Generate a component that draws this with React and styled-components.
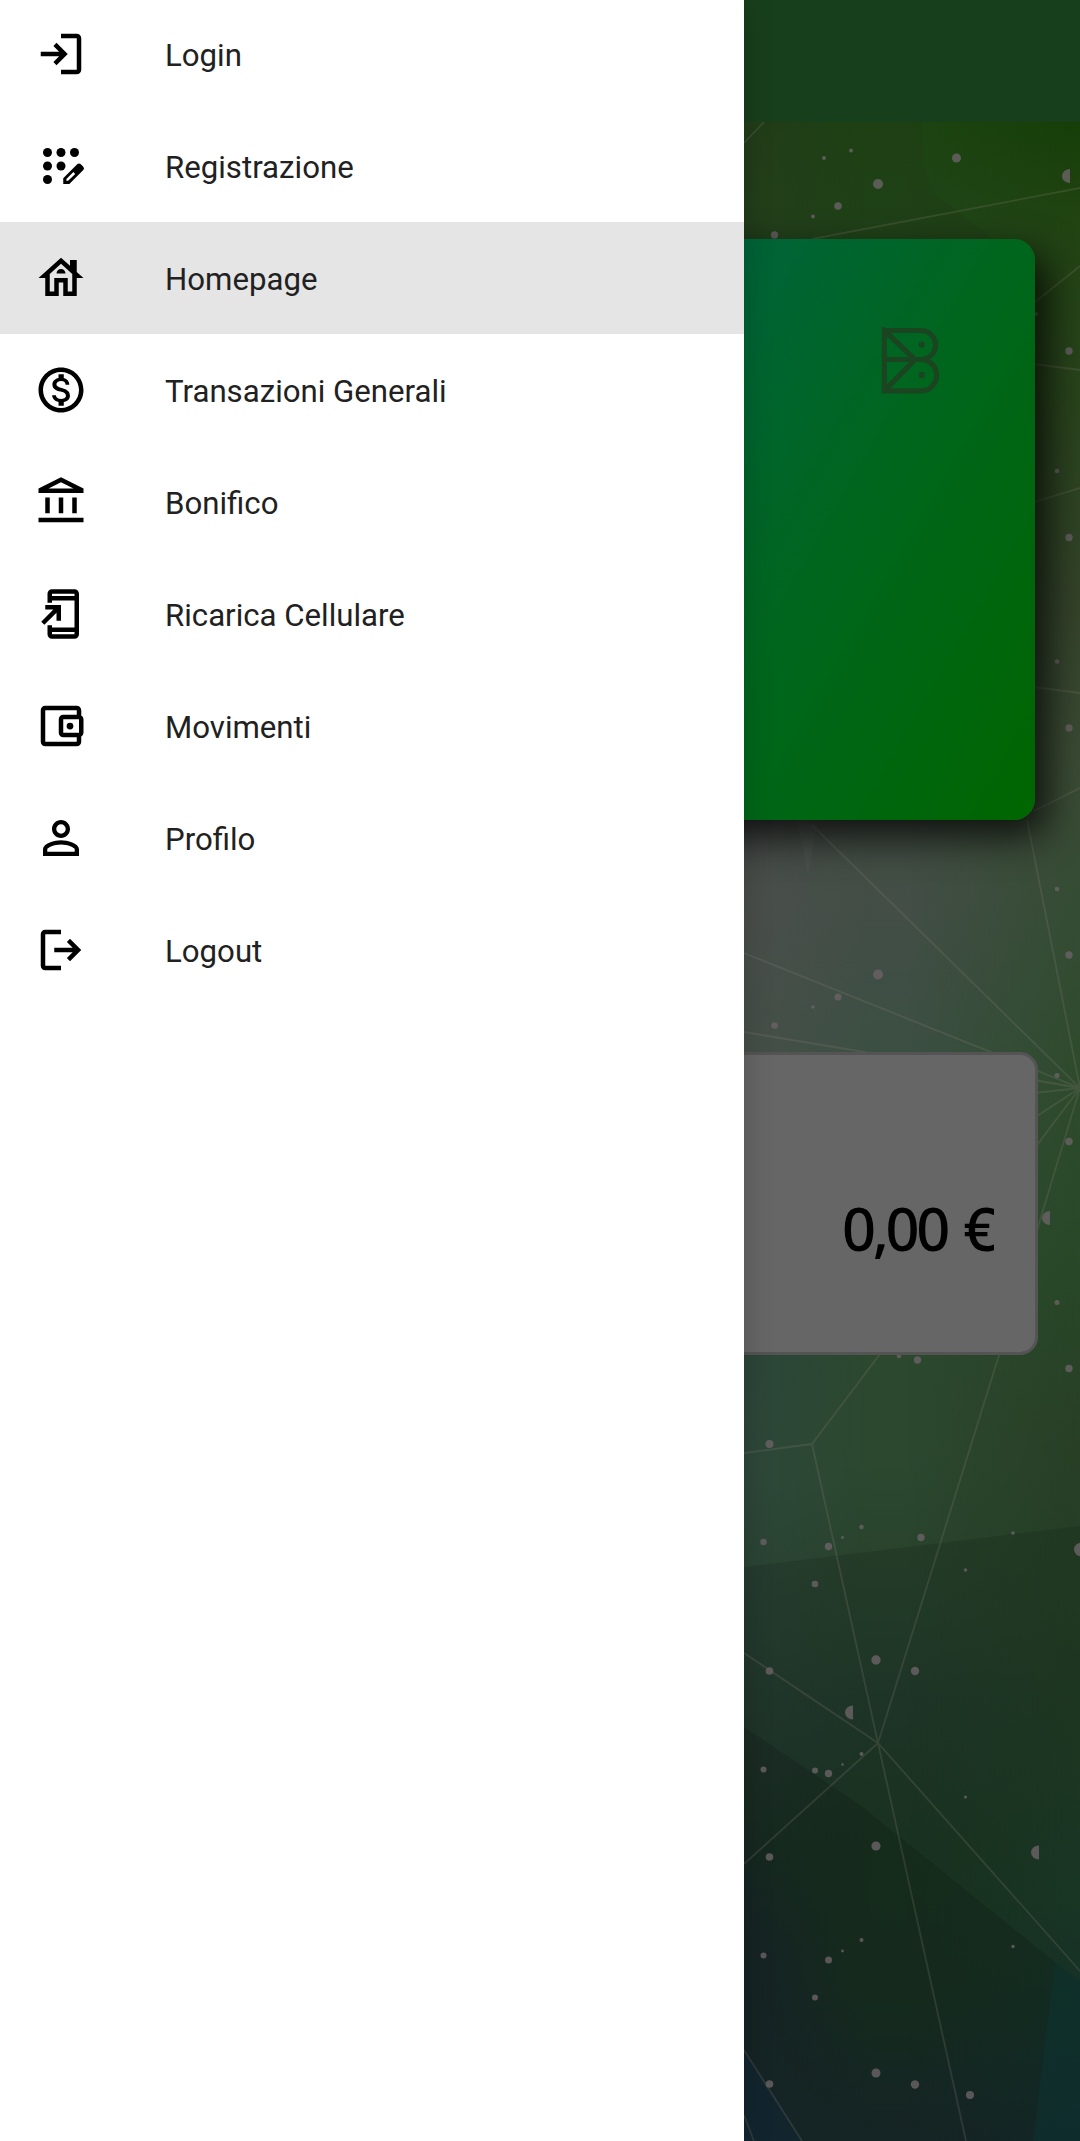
import React from 'react';
import styled, { createGlobalStyle } from 'styled-components';
import {
  MdOutlineHouse,
  MdOutlineMonetizationOn,
  MdOutlineAccountBalanceWallet,
  MdPersonOutline,
} from 'react-icons/md';

const GlobalStyle = createGlobalStyle`
  body {
    margin: 0;
    background: #1d3024;
  }
`;

const Screen = styled.div`
  position: relative;
  width: 1080px;
  height: 2141px;
  overflow: hidden;
  font-family: Roboto, 'Noto Sans', sans-serif;
`;

const Backdrop = styled.svg`
  position: absolute;
  inset: 0;
`;

const Page = styled.div`
  position: relative;
  display: flex;
  flex-direction: column;
  height: 100%;
`;

const AppBar = styled.header`
  height: 122px;
  flex: none;
  background: #183f1b;
`;

const Content = styled.main`
  display: flex;
  flex-direction: column;
  align-items: center;
  gap: 232px;
  padding-top: 116.5px;
`;

const BankCard = styled.section`
  box-sizing: border-box;
  display: flex;
  justify-content: flex-end;
  align-items: flex-start;
  width: 989px;
  height: 581.5px;
  padding: 88.5px 96px;
  border-radius: 21px;
  background: linear-gradient(120deg, #005a66 10%, #006432 58%, #00661d 73%, #006600 100%);
  box-shadow: 12px 16px 38px rgba(0, 0, 0, 0.78);
`;

const BalanceCard = styled.section`
  box-sizing: border-box;
  display: flex;
  justify-content: flex-end;
  align-items: center;
  width: 996px;
  height: 303px;
  padding: 49px 41px 0 0;
  border: 3px solid #545454;
  border-radius: 18px;
  background: #666;
`;

const Balance = styled.span`
  overflow: hidden;
  font: 500 59.5px/82px 'Noto Sans', sans-serif;
  letter-spacing: -3.4px;
  word-spacing: 4.5px;
  color: #000;
`;

const Drawer = styled.nav`
  position: absolute;
  top: 0;
  left: 0;
  display: flex;
  flex-direction: column;
  width: 744px;
  height: 100%;
  background: #fff;
  box-shadow: 0 0 28px rgba(0, 0, 0, 0.2);
`;

const Item = styled.a`
  display: flex;
  align-items: center;
  flex: none;
  gap: 77px;
  height: 112px;
  padding-left: 34px;
  background: ${(p) => (p.$active ? '#e5e5e5' : 'transparent')};

  &:first-child {
    margin-top: -2px;
  }

  svg {
    flex: none;
    width: 54px;
    height: 54px;
    fill: #000;
    color: #000;
  }
`;

const Label = styled.span`
  padding-top: 3px;
  font-size: 31.2px;
  line-height: 37px;
  color: #212121;
`;

const LoginIcon = () => (
  <svg viewBox="0 -960 960 960">
    <path d="M480-120v-80h280v-560H480v-80h280q33 0 56.5 23.5T840-760v560q0 33-23.5 56.5T760-120H480Zm-80-160-55-58 102-102H120v-80h327L345-622l55-58 200 200-200 200Z" />
  </svg>
);

const LogoutIcon = () => (
  <svg viewBox="0 -960 960 960">
    <path d="M200-120q-33 0-56.5-23.5T120-200v-560q0-33 23.5-56.5T200-840h280v80H200v560h280v80H200Zm440-160-55-58 102-102H360v-80h327L585-622l55-58 200 200-200 200Z" />
  </svg>
);

const RegistrationIcon = () => (
  <svg viewBox="0 0 24 24">
    {[[6, 6], [12, 6], [18, 6], [6, 12], [12, 12], [6, 18]].map(([x, y]) => (
      <circle key={`${x}-${y}`} cx={x} cy={y} r="2" />
    ))}
    <path
      fillRule="evenodd"
      d="M13 20V17.4L19.2 11.2Q20 10.5 20.8 11.2L21.9 12.3Q22.6 13 21.9 13.8L15.7 20ZM14.4 18.6H15.2L18.3 15.5 17.5 14.7 14.4 17.8Z"
    />
  </svg>
);

const BankIcon = () => (
  <svg viewBox="0 -960 960 960">
    <path d="M200-280v-280h80v280h-80Zm240 0v-280h80v280h-80ZM80-120v-80h800v80H80Zm600-160v-280h80v280h-80ZM80-640v-80l400-200 400 200v80H80Zm178-80h444L480-830 258-720Z" />
  </svg>
);

const PhoneIcon = () => (
  <svg viewBox="0 0 24 24">
    <path
      fillRule="evenodd"
      d="M20 3c0-1.1-.9-2-2-2H8c-1.1 0-2 .9-2 2v4h2V6h10v12H8v-1H6v4c0 1.1.9 2 2 2h10c1.1 0 2-.9 2-2ZM8 3h10v1H8ZM8 20h10v1H8Z"
    />
    <path d="M5 8h7v7h-2v-3.6l-5.4 5.4-1.4-1.4L8.6 10H5Z" />
  </svg>
);

const CardLogo = () => (
  <svg width="58" height="68" viewBox="881 327 58 68" fill="none" stroke="#1b4520" strokeWidth="5.2">
    <path d="M884.3 330.5H921a14.5 14.5 0 0 1 0 29H884.3M921 359.5a15.7 15.7 0 0 1 0 31.4H884.3V330.5L915 359.5 884.3 390.9" />
    <circle cx="921.8" cy="344.6" r="3.2" fill="#1b4520" stroke="none" />
    <circle cx="921.8" cy="374.9" r="3.2" fill="#1b4520" stroke="none" />
  </svg>
);

const columns = [
  {
    id: 'left',
    stops: [[122, '#233e1c'], [238, '#254220'], [820, '#464a48'], [900, '#4b4f4c'], [1050, '#465049'], [1360, '#2d463a'], [1480, '#2e483b'], [1566, '#2b4436'], [1720, '#253c30'], [1850, '#1e342b'], [1960, '#1e2f30'], [2141, '#1d2f32']],
  },
  {
    id: 'middle',
    stops: [[122, '#1d4412'], [238, '#20451a'], [820, '#404b41'], [900, '#434e46'], [1050, '#3c4f43'], [1360, '#2c482f'], [1460, '#2c482f'], [1560, '#29432d'], [1700, '#223b2c'], [1850, '#1d3824'], [1980, '#1c3726'], [2141, '#1c3030']],
  },
  {
    id: 'right',
    stops: [[122, '#163f08'], [238, '#234414'], [460, '#2c4420'], [600, '#34432a'], [780, '#3b4c35'], [900, '#354c34'], [1050, '#2f4b2e'], [1250, '#284828'], [1450, '#283f26'], [1560, '#253e26'], [1700, '#213d26'], [1900, '#1d3c29'], [2000, '#18382c'], [2141, '#183232']],
  },
];

const lines = [
  [744, 143, 764, 122], [812, 239, 1080, 188], [1034, 303, 1080, 266],
  [1034, 364, 1080, 370], [1034, 502, 1080, 488], [1034, 687, 1080, 693],
  [1034, 811, 1080, 788], [812, 825, 1080, 1088], [1027, 820, 1080, 1088],
  [744, 953, 1080, 1088], [744, 1032, 1080, 1088], [1034, 1080, 1080, 1088],
  [1034, 1093, 1080, 1088], [1034, 1118, 1080, 1088], [1034, 1149, 1080, 1088],
  [1080, 1088, 1034, 1240], [880, 1354, 812, 1444], [744, 1453, 812, 1444],
  [812, 1444, 878, 1743], [1000, 1352, 878, 1743], [744, 1653, 878, 1743],
  [878, 1743, 744, 1864], [878, 1743, 1080, 1971], [878, 1743, 966, 2141],
  [744, 2050, 802, 2141], [744, 2115, 754, 2141],
];

const dots = [
  [824, 158, 2], [851, 150.5, 2], [878, 184, 5], [838, 206, 3.7], [813, 216.5, 2], [774.5, 235, 3.7],
  [956.5, 158, 4.5], [1036, 314, 2], [1069, 351, 3.7], [1057, 471, 2.3], [1069, 537.5, 3.7],
  [1057, 661.5, 2.3], [1069, 728, 3.7], [1057, 889, 2.3], [1069, 955, 3.7], [878, 974.5, 5],
  [838, 997, 3.5], [813, 1007, 1.8], [774.5, 1025.5, 3.3], [1057, 1075.5, 2.5], [1069, 1141.5, 3.7],
  [1057, 1302.5, 2.5], [1069, 1368.5, 3.7], [899, 1356, 2.3], [917.5, 1360, 3.7], [769.5, 1444, 4],
  [763.5, 1542, 3.2], [828.5, 1546.5, 3.7], [861.5, 1527, 2.2], [842.5, 1537.5, 1.4], [921, 1537.5, 3.7],
  [1013, 1533, 1.8], [965.5, 1570, 1.8], [815, 1584, 3.3], [876, 1660, 4.7], [915, 1671, 4.2],
  [769.5, 1671, 3.8], [763.5, 1769.5, 3], [815, 1770.5, 3], [828.5, 1773.5, 3.7], [861.5, 1754, 2],
  [842.5, 1764.5, 1.3], [965.5, 1797, 1.6], [876, 1846, 4.6], [769.5, 1857, 3.8], [763.5, 1955.5, 3],
  [828.5, 1960, 3.5], [861.5, 1940, 2], [842.5, 1951, 1.4], [1013, 1946.5, 1.7], [815, 1997.5, 3],
  [876, 2073, 4.5], [915, 2084.5, 4.2], [769.5, 2084, 3.8], [970, 2095, 4],
];

const halfDots = [[1070, 176], [1050, 1218], [853, 1712.5], [1039, 1852.5], [1082, 1549.5]];

function Wallpaper() {
  return (
    <Backdrop width="1080" height="2141" viewBox="0 0 1080 2141" aria-hidden="true">
      <defs>
        {columns.map(({ id, stops }) => (
          <linearGradient key={id} id={id} gradientUnits="userSpaceOnUse" x1="0" y1="0" x2="0" y2="2141">
            {stops.map(([y, color]) => (
              <stop key={y} offset={y / 2141} stopColor={color} />
            ))}
          </linearGradient>
        ))}
        <linearGradient id="fadeMiddle" gradientUnits="userSpaceOnUse" x1="745" y1="0" x2="870" y2="0">
          <stop offset="0" stopColor="#000" />
          <stop offset="1" stopColor="#fff" />
        </linearGradient>
        <linearGradient id="fadeRight" gradientUnits="userSpaceOnUse" x1="910" y1="0" x2="1075" y2="0">
          <stop offset="0" stopColor="#000" />
          <stop offset="1" stopColor="#fff" />
        </linearGradient>
        <mask id="maskMiddle"><rect width="1080" height="2141" fill="url(#fadeMiddle)" /></mask>
        <mask id="maskRight"><rect width="1080" height="2141" fill="url(#fadeRight)" /></mask>
      </defs>
      <rect width="1080" height="2141" fill="url(#left)" />
      <rect width="1080" height="2141" fill="url(#middle)" mask="url(#maskMiddle)" />
      <rect width="1080" height="2141" fill="url(#right)" mask="url(#maskRight)" />
      <path d="M744 122H921L924 165 932 192 992 238H744Z" fill="#203c16" opacity=".4" />
      <path d="M797 820H818L808 875Z" fill="#666" opacity=".18" />
      <path d="M1022 1382L1080 1434V1526L744 1567V2141H1080V1434Z" fill="#000" opacity=".11" />
      <path d="M744 1727L860 1805 1080 1982V2141H744Z" fill="#000" opacity=".12" />
      <path d="M1055 1962L1080 1982V2141H1033Z" fill="#0d3838" opacity=".4" />
      <path d="M744 2050L802 2141H744Z" fill="#10283a" opacity=".45" />
      <g stroke="#8c8078" strokeWidth="1.8" opacity=".22">
        {lines.map(([x1, y1, x2, y2], i) => (
          <line key={i} x1={x1} y1={y1} x2={x2} y2={y2} />
        ))}
      </g>
      <g fill="#6a6266" opacity=".82">
        {dots.map(([cx, cy, r], i) => (
          <circle key={i} cx={cx} cy={cy} r={r} />
        ))}
        {halfDots.map(([x, y]) => (
          <path key={y} d={`M${x} ${y - 7}a8 7 0 0 0 0 14z`} />
        ))}
      </g>
    </Backdrop>
  );
}

const items = [
  { label: 'Login', Icon: LoginIcon },
  { label: 'Registrazione', Icon: RegistrationIcon },
  { label: 'Homepage', Icon: MdOutlineHouse, active: true },
  { label: 'Transazioni Generali', Icon: MdOutlineMonetizationOn },
  { label: 'Bonifico', Icon: BankIcon },
  { label: 'Ricarica Cellulare', Icon: PhoneIcon },
  { label: 'Movimenti', Icon: MdOutlineAccountBalanceWallet },
  { label: 'Profilo', Icon: MdPersonOutline },
  { label: 'Logout', Icon: LogoutIcon },
];

export default function App() {
  return (
    <Screen>
      <GlobalStyle />
      <Wallpaper />
      <Page>
        <AppBar />
        <Content>
          <BankCard>
            <CardLogo />
          </BankCard>
          <BalanceCard>
            <Balance>0,00 €</Balance>
          </BalanceCard>
        </Content>
      </Page>
      <Drawer>
        {items.map(({ label, Icon, active }) => (
          <Item key={label} $active={active}>
            <Icon />
            <Label>{label}</Label>
          </Item>
        ))}
      </Drawer>
    </Screen>
  );
}
